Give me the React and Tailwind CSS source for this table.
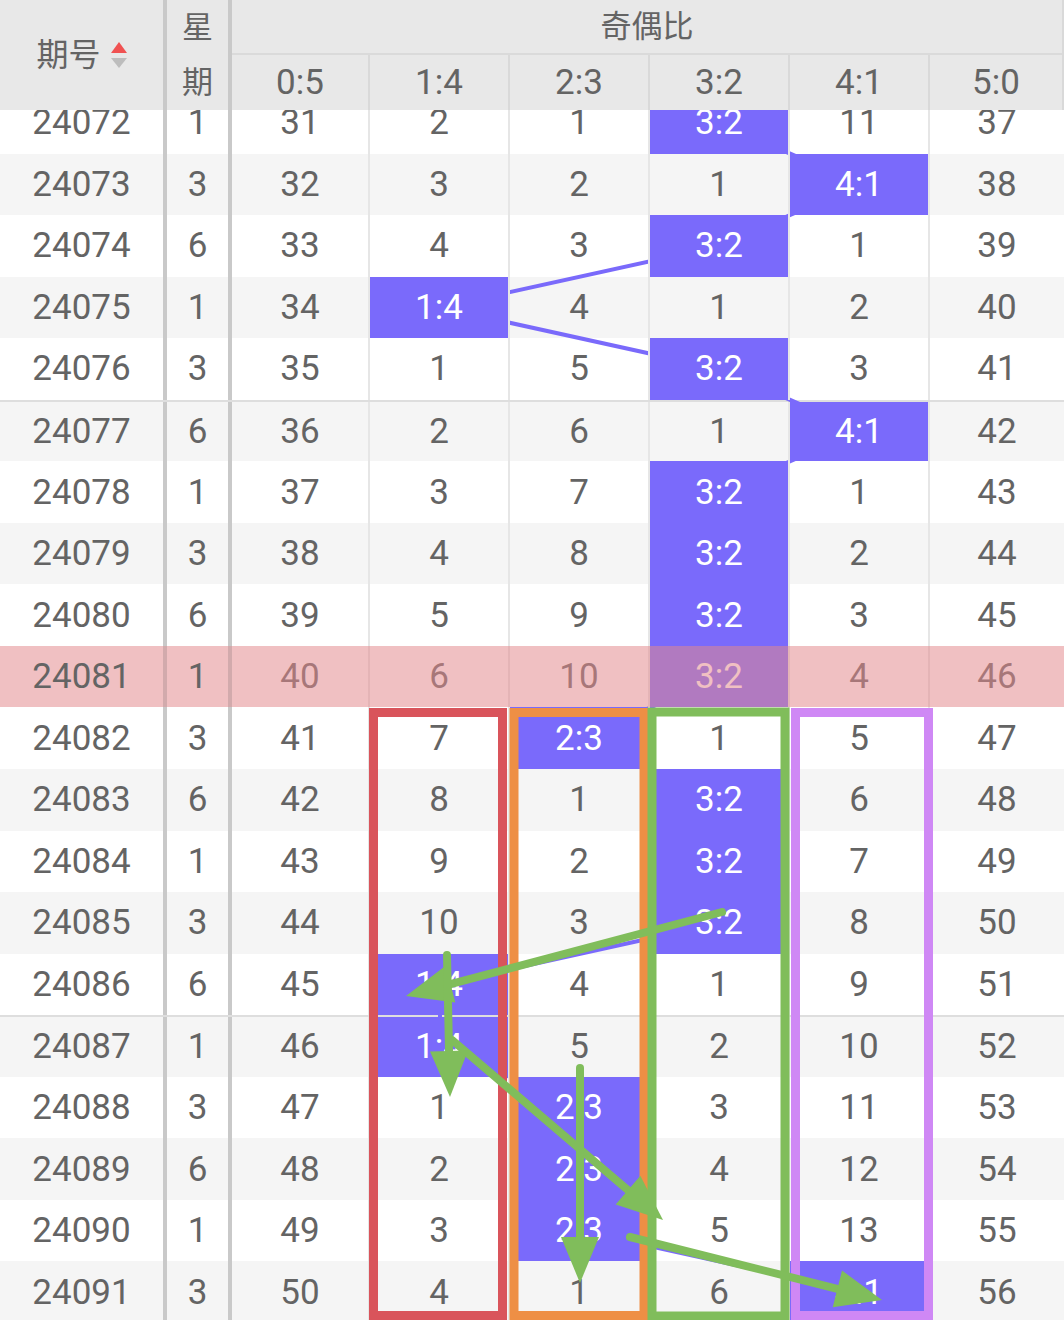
import clsx from "clsx";

const LABELS = ["0:5", "1:4", "2:3", "3:2", "4:1", "5:0"];
const WIDTHS = ["w-[138px]", "w-[140px]", "w-[140px]", "w-[140px]", "w-[140px]", "flex-1"];
const CX = [301, 440, 580, 720, 860, 997];
const TOP = 92;
const RH = 61.56;

// hit = index of the odd/even column that came out in that draw
const ROWS = [
  { id: "24072", wk: 1, hit: 3, vals: [31, 2, 1, 0, 11, 37] },
  { id: "24073", wk: 3, hit: 4, vals: [32, 3, 2, 1, 0, 38] },
  { id: "24074", wk: 6, hit: 3, vals: [33, 4, 3, 0, 1, 39] },
  { id: "24075", wk: 1, hit: 1, vals: [34, 0, 4, 1, 2, 40] },
  { id: "24076", wk: 3, hit: 3, vals: [35, 1, 5, 0, 3, 41] },
  { id: "24077", wk: 6, hit: 4, vals: [36, 2, 6, 1, 0, 42] },
  { id: "24078", wk: 1, hit: 3, vals: [37, 3, 7, 0, 1, 43] },
  { id: "24079", wk: 3, hit: 3, vals: [38, 4, 8, 0, 2, 44] },
  { id: "24080", wk: 6, hit: 3, vals: [39, 5, 9, 0, 3, 45] },
  { id: "24081", wk: 1, hit: 3, vals: [40, 6, 10, 0, 4, 46] },
  { id: "24082", wk: 3, hit: 2, vals: [41, 7, 0, 1, 5, 47] },
  { id: "24083", wk: 6, hit: 3, vals: [42, 8, 1, 0, 6, 48] },
  { id: "24084", wk: 1, hit: 3, vals: [43, 9, 2, 0, 7, 49] },
  { id: "24085", wk: 3, hit: 3, vals: [44, 10, 3, 0, 8, 50] },
  { id: "24086", wk: 6, hit: 1, vals: [45, 0, 4, 1, 9, 51] },
  { id: "24087", wk: 1, hit: 1, vals: [46, 0, 5, 2, 10, 52] },
  { id: "24088", wk: 3, hit: 2, vals: [47, 1, 0, 3, 11, 53] },
  { id: "24089", wk: 6, hit: 2, vals: [48, 2, 0, 4, 12, 54] },
  { id: "24090", wk: 1, hit: 2, vals: [49, 3, 0, 5, 13, 55] },
  { id: "24091", wk: 3, hit: 4, vals: [50, 4, 1, 6, 0, 56] },
];

const GREEN = "#80bd5b";

function Arrow({ x1, y1, x2, y2 }) {
  const dx = x2 - x1;
  const dy = y2 - y1;
  const len = Math.hypot(dx, dy);
  const ux = dx / len;
  const uy = dy / len;
  const bx = x2 - ux * 46;
  const by = y2 - uy * 46;
  const px = -uy * 19;
  const py = ux * 19;
  return (
    <g>
      <line x1={x1} y1={y1} x2={bx + ux * 4} y2={by + uy * 4} stroke={GREEN} strokeWidth="8" strokeLinecap="round" />
      <polygon points={`${x2},${y2} ${bx + px},${by + py} ${bx - px},${by - py}`} fill={GREEN} />
    </g>
  );
}

function Header() {
  return (
    <div className="relative z-40 flex h-[110px] bg-[#e8e8e8] text-[#646464]">
      <div className="flex w-[167px] items-center justify-center gap-[10px] border-r-4 border-[#c9c9c9]">
        <span className="text-[32px] leading-none">期号</span>
        <svg width="16" height="27" viewBox="0 0 16 27">
          <polygon points="8,0 16,11 0,11" fill="#f05252" />
          <polygon points="0,16 16,16 8,26" fill="#bdbdbd" />
        </svg>
      </div>
      <div className="flex w-[65px] flex-col border-r-4 border-[#c9c9c9] text-[31px] leading-none">
        <span className="flex h-[55px] items-center justify-center">星</span>
        <span className="flex h-[55px] items-center justify-center">期</span>
      </div>
      <div className="flex flex-1 flex-col border-r-2 border-[#d9d9d9]">
        <div className="flex h-[55px] items-center justify-center border-b-2 border-[#dadada] text-[31px] leading-none">
          奇偶比
        </div>
        <div className="flex flex-1">
          {LABELS.map((l, k) => (
            <div
              key={l}
              className={clsx(
                "flex items-center justify-center text-[35px] leading-none",
                WIDTHS[k],
                k < 5 && "border-r-2 border-[#d9d9d9]"
              )}
            >
              {l}
            </div>
          ))}
        </div>
      </div>
    </div>
  );
}

function Row({ r, i }) {
  const pink = r.id === "24081";
  const group = r.id === "24077" || r.id === "24087";
  return (
    <div
      className={clsx(
        "relative flex h-[61.56px] text-[35px] leading-none text-[#646464]",
        i % 2 === 1 && !pink ? "bg-[#f5f5f5]" : "bg-white",
        group && "border-t-2 border-[#dedede]"
      )}
    >
      <div
        className={clsx(
          "relative z-20 flex w-[167px] items-center justify-center border-r-4",
          pink ? "border-[#d2aaac] bg-[#f0c0c2]" : "border-[#c9c9c9]"
        )}
      >
        {r.id}
      </div>
      <div
        className={clsx(
          "relative z-20 flex w-[65px] items-center justify-center border-r-4",
          pink ? "border-[#d2aaac] bg-[#f0c0c2]" : "border-[#c9c9c9]"
        )}
      >
        {r.wk}
      </div>
      {r.vals.map((v, k) => (
        <div
          key={k}
          className={clsx(
            "relative z-20 flex items-center justify-center",
            WIDTHS[k],
            k < 5 && "border-r-2 border-[#e6e6e6]",
            k === r.hit && "bg-[#7a6afb] text-white"
          )}
        >
          {k === r.hit ? LABELS[k] : v}
        </div>
      ))}
      {pink && <div className="absolute inset-y-0 left-[232px] right-0 z-30 bg-[rgba(227,136,140,0.53)]" />}
    </div>
  );
}

export default function App() {
  const pts = ROWS.map((r, i) => `${CX[r.hit]},${TOP + RH * (i + 0.5)}`).join(" ");
  return (
    <div className="relative isolate h-[1320px] w-[1064px] overflow-hidden bg-white font-[Roboto,'Noto_Sans_CJK_SC',sans-serif]">
      <Header />
      <div className="-mt-[18px]">
        {ROWS.map((r, i) => (
          <Row key={r.id} r={r} i={i} />
        ))}
      </div>

      {/* trend line, sits under the cells */}
      <svg className="pointer-events-none absolute inset-0 z-10" width="1064" height="1320" viewBox="0 0 1064 1320">
        <polyline points={pts} fill="none" stroke="#7a6afb" strokeWidth="4" strokeLinejoin="round" />
      </svg>

      {/* hand-drawn annotations */}
      <svg className="pointer-events-none absolute inset-0 z-[35]" width="1064" height="1320" viewBox="0 0 1064 1320">
        <rect x="373.5" y="712.5" width="129" height="603" fill="none" stroke="#d9545b" strokeWidth="9" />
        <rect x="514" y="712.5" width="130" height="603" fill="none" stroke="#ee8f45" strokeWidth="9" />
        <rect x="795.5" y="712.5" width="133" height="603" fill="none" stroke="#cf88f5" strokeWidth="9" />
        <rect x="652" y="712" width="133" height="604" fill="none" stroke={GREEN} strokeWidth="9" />
        <Arrow x1={722} y1={912} x2={406} y2={996} />
        <Arrow x1={447} y1={955} x2={450} y2={1097} />
        <Arrow x1={452} y1={1040} x2={663} y2={1220} />
        <Arrow x1={580} y1={1068} x2={580} y2={1283} />
        <Arrow x1={630} y1={1237} x2={882} y2={1300} />
      </svg>
    </div>
  );
}
